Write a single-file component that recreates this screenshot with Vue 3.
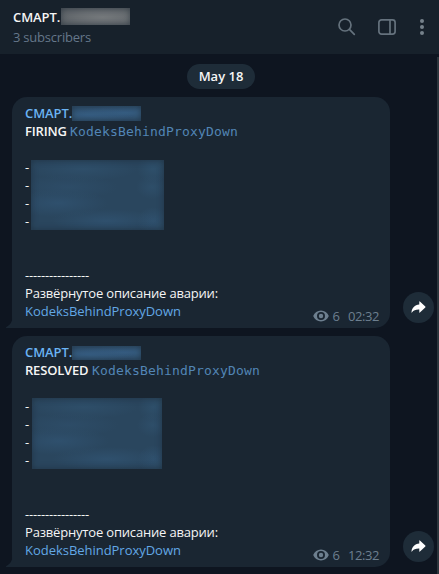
<script setup>
const messages = [
  { id: 1, status: 'FIRING', alert: 'KodeksBehindProxyDown', views: 6, time: '02:32', kind: 'firing' },
  { id: 2, status: 'RESOLVED', alert: 'KodeksBehindProxyDown', views: 6, time: '12:32', kind: 'resolved' },
]
</script>

<template>
  <div class="chat">
    <header class="header">
      <div class="titles">
        <div class="title"><span class="name">СМАРТ.</span><span class="mask mask-title"></span></div>
        <div class="subtitle">3 subscribers</div>
      </div>
      <svg class="icon search" viewBox="0 0 18 18">
        <circle cx="7" cy="7" r="6" />
        <path d="M11.4 11.4 L16.3 16.3" />
      </svg>
      <svg class="icon panel" viewBox="0 0 18 16">
        <rect x="0.9" y="0.9" width="16.2" height="14.2" rx="2.6" />
        <path d="M12 1 V15" />
      </svg>
      <svg class="dots" viewBox="0 0 4 16">
        <circle cx="2" cy="2" r="2" />
        <circle cx="2" cy="8" r="2" />
        <circle cx="2" cy="14" r="2" />
      </svg>
    </header>

    <main class="history">
      <div class="scrollbar"></div>
      <div class="date">May 18</div>
      <div v-for="m in messages" :key="m.id" class="row">
        <article class="bubble" :class="m.kind">
          <svg class="tail" viewBox="0 0 7 12"><path d="M7 0 C6 6 4.500 9 0 11.200 V12 H7 Z" /></svg>
          <div class="line author"><span class="name">СМАРТ.</span><span class="mask mask-author"></span></div>
          <div class="line"><b class="status">{{ m.status }}</b><code>{{ m.alert }}</code></div>
          <div class="list">
            <div class="bullets"><div v-for="n in 4" :key="n" class="line">-</div></div>
            <div class="mask mask-list"></div>
          </div>
          <div class="line rule">----------------</div>
          <div class="line about">Развёрнутое описание аварии:</div>
          <div class="line last">
            <a class="link">{{ m.alert }}</a>
            <span class="meta">
              <svg class="eye" viewBox="0 0 16 12">
                <path fill-rule="evenodd" d="M8 .5 C4.400 .5 1.500 2.600 .2 6 C1.500 9.400 4.400 11.500 8 11.500 S14.500 9.400 15.800 6 C14.500 2.600 11.600 .5 8 .5 Z M8 2 A4 4 0 1 1 8 10 A4 4 0 1 1 8 2 Z" />
                <circle cx="8" cy="6" r="2.200" />
              </svg>
              <span class="views">{{ m.views }}</span>
              <span class="time">{{ m.time }}</span>
            </span>
          </div>
        </article>
        <div class="share">
          <svg viewBox="0 0 15 13"><path d="M8.300 .6 Q8.300 0 8.900 .4 L14.300 5.500 Q14.700 6 14.300 6.500 L8.900 11.600 Q8.300 12 8.300 11.400 V8.600 C4.800 8.500 2.600 9.300 .9 11.500 Q.4 12 .5 11.200 C1 6.800 3.600 4 8.300 3.500 Z" /></svg>
        </div>
      </div>
    </main>
  </div>
</template>

<style>
body { margin: 0; background: #0e1621; overflow: hidden; }
</style>

<style scoped>
.chat {
  width: 439px;
  height: 574px;
  overflow: hidden;
  background: #0e1520;
  color: #f5f5f5;
  font: 13px/18px "Open Sans", "Noto Sans", sans-serif;
  white-space: nowrap;
}
.header {
  box-sizing: border-box;
  height: 54px;
  padding: 0 15px 0 13px;
  display: flex;
  align-items: center;
  background: #17212b;
}
.titles { flex: 1; height: 40px; }
.title { height: 20px; display: flex; align-items: center; line-height: 20px; }
.name { width: 47px; font-weight: 600; letter-spacing: -0.1px; }
.title .name { width: 48px; }
.subtitle { line-height: 20px; color: #65778a; letter-spacing: -0.22px; }
.icon { fill: none; stroke: #65727d; stroke-width: 1.7; stroke-linecap: round; }
.search { width: 18px; height: 18px; margin-right: 22px; }
.panel { width: 18px; height: 16px; margin-right: 24px; }
.dots { width: 4px; height: 16px; fill: #75818b; }
.history { position: relative; height: 520px; overflow: hidden; }
.scrollbar { position: absolute; right: 0; top: 3px; width: 2px; height: 517px; background: #2c353c; }
.date {
  width: 68px;
  height: 25px;
  margin: 10px auto 8px 187px;
  border-radius: 13px;
  background: #1e2c38;
  text-align: center;
  line-height: 25px;
  font-weight: 600;
}
.row { display: flex; align-items: flex-end; gap: 13px; padding-left: 12px; margin-bottom: 8px; }
.bubble {
  position: relative;
  box-sizing: border-box;
  width: 378px;
  height: 231px;
  padding: 7px 11px 8px 13px;
  border-radius: 15px 15px 15px 0;
  background: #1a2632;
}
.tail { position: absolute; left: -6px; bottom: 0; width: 7px; height: 12px; fill: #1a2632; }
.line { height: 18px; display: flex; align-items: center; }
.author { color: #6ab3f3; }
.status { font-weight: 600; margin-right: 3px; letter-spacing: -0.18px; }
.firing .status { width: 42px; }
.resolved .status { width: 64px; }
code { font: 13px/18px "DejaVu Sans Mono", monospace; letter-spacing: 0.174px; color: #5285b5; padding-top: 2px; }
.list { display: flex; margin: 18px 0 36px; height: 72px; }
.bullets { width: 6px; }
.rule { letter-spacing: -0.18px; }
.about { letter-spacing: -0.18px; }
.last { justify-content: space-between; }
.link { color: #62a8e6; letter-spacing: -0.03px; }
.meta { display: flex; align-items: center; color: #6d7f8f; padding-top: 10px; }
.eye { width: 16px; height: 12px; fill: #6d7f8f; }
.views { margin-left: 4px; }
.time { margin-left: 8px; width: 31px; letter-spacing: -0.4px; }
.mask { display: block; flex: none; box-shadow: inset 0 0 6px rgba(26, 39, 50, 0.55); }
.mask-title {
  width: 69px;
  height: 17px;
  margin-bottom: 2px;
  background: radial-gradient(ellipse at 60% 55%, #75797c 0, #686d71 45%, #53595f 100%);
}
.mask-author {
  width: 69px;
  height: 15px;
  background: radial-gradient(ellipse at 25% 60%, #365d81, rgba(54, 93, 129, 0) 60%), radial-gradient(ellipse at 75% 45%, #365d81, rgba(54, 93, 129, 0) 65%), #2f4f6c;
}
.resolved .mask-author { height: 14px; margin-top: 1px; }
.mask-list {
  width: 133px;
  height: 70px;
  margin-top: 2px;
  background:
    radial-gradient(ellipse 55px 12px at 52px 9px, #2e4e69, rgba(46, 78, 105, 0)),
    radial-gradient(ellipse 50px 12px at 37px 27px, #2d4c67, rgba(45, 76, 103, 0)),
    radial-gradient(ellipse 50px 14px at 27px 43px, #2f506d, rgba(47, 80, 109, 0)),
    radial-gradient(ellipse 55px 12px at 75px 61px, #2f506d, rgba(47, 80, 109, 0)),
    radial-gradient(ellipse 16px 14px at 122px 9px, #2e4f6a, rgba(46, 79, 106, 0)),
    radial-gradient(ellipse 16px 12px at 121px 27px, #2e4e69, rgba(46, 78, 105, 0)),
    radial-gradient(ellipse 16px 14px at 122px 61px, #2f506d, rgba(47, 80, 109, 0)),
    #2a465e;
}
.resolved .mask-list { width: 130px; height: 71px; margin: 1px 0 0 1px; }
.share {
  width: 31px;
  height: 31px;
  margin-bottom: 5px;
  border-radius: 50%;
  background: #1e2c38;
  display: flex;
  align-items: center;
  justify-content: center;
}
.share svg { width: 15px; height: 13px; fill: #fff; }
</style>
